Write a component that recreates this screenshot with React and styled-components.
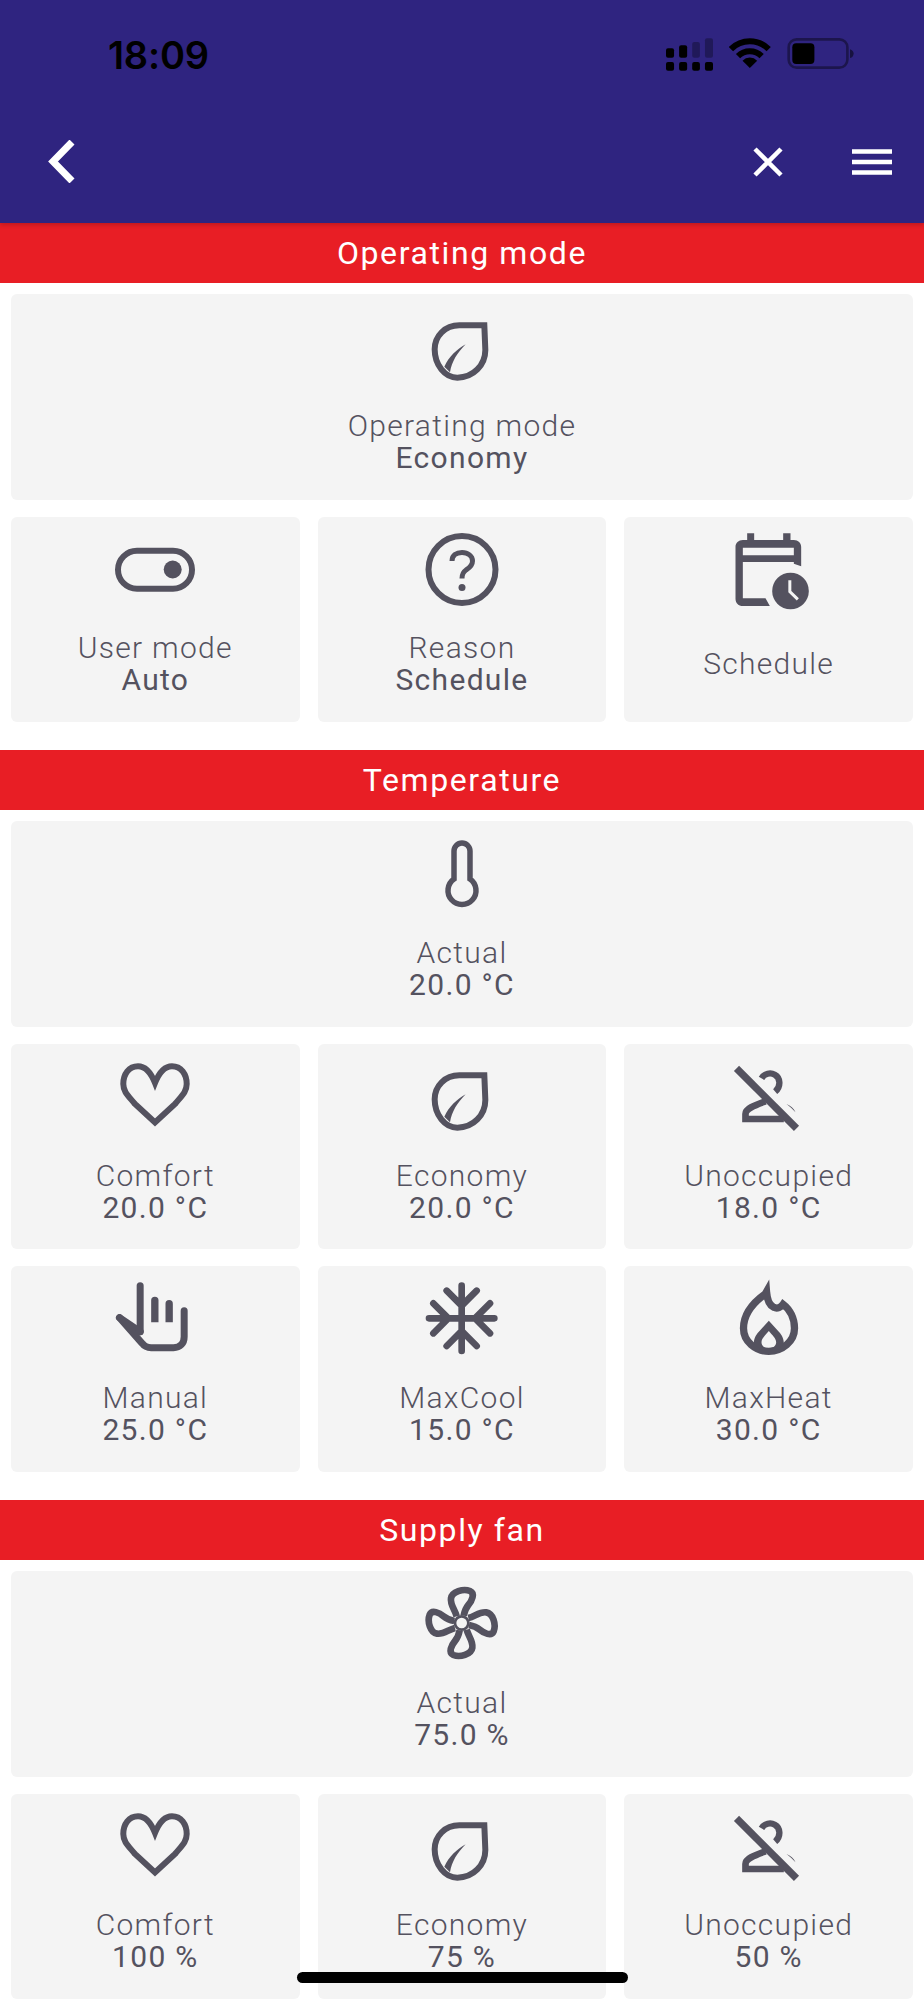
import styled, { createGlobalStyle } from 'styled-components';

const GlobalStyle = createGlobalStyle`
  html, body {
    margin: 0;
    padding: 0;
    background: #fff;
  }
  body {
    font-family: Roboto, "Liberation Sans", sans-serif;
  }
`;

const Screen = styled.div`
  position: relative;
  width: 924px;
  height: 2000px;
  overflow: hidden;
  background: #fff;
`;

const Header = styled.header`
  position: relative;
  z-index: 1;
  height: 223px;
  display: flex;
  flex-direction: column;
  background: #2f2480;
  box-shadow: 0 2px 4px rgba(0, 0, 0, 0.18);
`;

const StatusBar = styled.div`
  height: 100px;
  box-sizing: border-box;
  padding: 32px 70px 0 108px;
  display: flex;
  justify-content: space-between;
  align-items: flex-start;
`;

const Time = styled.span`
  font-family: Inter, "Liberation Sans", sans-serif;
  font-size: 38px;
  line-height: 46px;
  font-weight: 600;
  letter-spacing: -0.2px;
  color: #000;
`;

const StatusIcons = styled.div`
  display: flex;
  align-items: flex-start;
  gap: 16px;
  padding-top: 6px;
`;

const Toolbar = styled.div`
  flex: 1;
  padding: 0 32px 0 47px;
  display: flex;
  justify-content: space-between;
  align-items: center;
`;

const ToolbarRight = styled.div`
  display: flex;
  align-items: center;
  gap: 69px;
`;

const Section = styled.section`
  display: block;
`;

const SectionTitle = styled.h2`
  margin: 0;
  height: 60px;
  background: #e81e25;
  color: #fff;
  font-size: 32px;
  line-height: 60px;
  font-weight: 400;
  letter-spacing: 1.6px;
  text-align: center;
`;

const Grid = styled.div`
  display: grid;
  grid-template-columns: repeat(3, 1fr);
  grid-auto-rows: 205.5px;
  column-gap: 18px;
  row-gap: 17px;
  padding: 11px 11px 28.3px;
`;

const Card = styled.div`
  grid-column: ${(p) => (p.$wide ? '1 / -1' : 'auto')};
  box-sizing: border-box;
  padding: 8px 8px 6px;
  display: flex;
  flex-direction: column;
  align-items: center;
  background: #f4f4f4;
  border-radius: 6px;
  color: #54525f;
`;

const Icon = styled.svg`
  display: block;
  flex: none;
  width: 88px;
  height: 88px;
`;

const CardText = styled.div`
  flex: 1;
  display: flex;
  flex-direction: column;
  justify-content: center;
  align-items: center;
`;

const Label = styled.span`
  font-size: 30px;
  line-height: 32px;
  font-weight: 300;
  letter-spacing: 1.3px;
`;

const Value = styled.span`
  font-size: 30px;
  line-height: 32px;
  font-weight: 400;
  letter-spacing: 1.3px;
`;

const HomeIndicator = styled.div`
  position: absolute;
  left: 297px;
  top: 1972px;
  width: 331px;
  height: 11px;
  border-radius: 6px;
  background: #000;
`;

const ICON = '#54525f';

function LeafIcon() {
  return (
    <Icon viewBox="54 -24 264 264">
      <path d="M253 46H178C135 46 104 78 104 118C104 165 135 203 172 203C220 203 256 165 256 120Z" fill="none" stroke={ICON} strokeWidth="18" />
      <path d="M197 103C170 118 147 140 133 170L150 187C155 155 172 128 197 103Z" fill={ICON} />
    </Icon>
  );
}

function ToggleIcon() {
  return (
    <Icon viewBox="0 0 88 88">
      <rect x="7" y="25.7" width="74" height="38" rx="19" fill="none" stroke={ICON} strokeWidth="6" />
      <circle cx="61.7" cy="44.5" r="9" fill={ICON} />
    </Icon>
  );
}

function HelpIcon() {
  return (
    <Icon viewBox="0 0 88 88">
      <circle cx="44" cy="44.5" r="33.5" fill="none" stroke={ICON} strokeWidth="6" />
      <path d="M34 36C34 30 38.5 27.5 44 27.5C50 27.5 54.5 31 54.5 36C54.5 41 51 43 48 45C45.5 46.7 44 48.5 44 53.5" fill="none" stroke={ICON} strokeWidth="5" />
      <circle cx="44" cy="62.5" r="3.5" fill={ICON} />
    </Icon>
  );
}

function CalendarIcon() {
  return (
    <Icon viewBox="43.5 12 264 264">
      <path
        fillRule="evenodd"
        fill={ICON}
        d="M110 37H131V57H218V37H240V57H250C263 57 272 66 272 78V136L250 128V123H97V232H165L178 255H97C84 255 75 246 75 233V78C75 66 84 57 97 57H110ZM97 80V103H250V80Z"
      />
      <circle cx="240" cy="210" r="55" fill={ICON} />
      <path d="M238 178V212L262 235" fill="none" stroke="#f4f4f4" strokeWidth="9" />
    </Icon>
  );
}

function ThermometerIcon() {
  return (
    <Icon viewBox="0 0 88 88">
      <path d="M36 50V22a8 8 0 0 1 16 0V50a14 14 0 1 1-16 0Z" fill="none" stroke={ICON} strokeWidth="5.5" />
    </Icon>
  );
}

function HeartIcon() {
  return (
    <Icon viewBox="0 0 88 88">
      <path d="M44 31C40 21 34 14.3 27 14.3C18 14.3 12.3 22 12.3 32C12.3 40 17.5 44 24 52L44 70.5L64 52C70.5 44 75.7 40 75.7 32C75.7 22 70 14.3 61 14.3C54 14.3 48 21 44 31Z" fill="none" stroke={ICON} strokeWidth="6" />
    </Icon>
  );
}

function UnoccupiedIcon() {
  return (
    <Icon viewBox="133.5 36 264 264">
      <path d="M168 85L348 265" fill="none" stroke={ICON} strokeWidth="22" />
      <path d="M243 115C252 100 270 97 283 104C300 113 302 140 284 155" fill="none" stroke={ICON} strokeWidth="19" />
      <path d="M195 237V222C195 205 225 195 255 184M185 237H310" fill="none" stroke={ICON} strokeWidth="20" />
      <path d="M318 192C330 197 340 205 345 217C338 208 328 200 318 192Z" fill={ICON} />
    </Icon>
  );
}

function HandIcon() {
  return (
    <Icon viewBox="34.5 12 264 264">
      <path d="M122 47V185" fill="none" stroke={ICON} strokeWidth="21" strokeLinecap="round" />
      <path d="M60 143L122 185" fill="none" stroke={ICON} strokeWidth="21" strokeLinecap="round" />
      <path d="M60 143L128 220C135 230 145 233 155 233H222C242 233 254 220 254 200V122" fill="none" stroke={ICON} strokeWidth="21" strokeLinecap="round" />
      <path d="M155 157V91a11 11 0 0 1 22 0V157ZM198 157V101a11 11 0 0 1 22 0V157Z" fill={ICON} />
    </Icon>
  );
}

function SnowIcon() {
  return (
    <Icon viewBox="54 12 264 264">
      <path
        d="M185 47V243M87 145H283M140 62L185 107L230 62M140 228L185 183L230 228M100 100L145 145L100 190M270 100L225 145L270 190"
        fill="none"
        stroke={ICON}
        strokeWidth="20"
        strokeLinecap="round"
      />
    </Icon>
  );
}

function FlameIcon() {
  return (
    <Icon viewBox="43.5 12 264 264">
      <path d="M164 72C125 100 99 135 99 175C99 215 135 244 175 244C215 244 252 215 252 175C252 145 238 118 218 103C212 112 200 117 190 112C175 106 170 90 168 65Z" fill="none" stroke={ICON} strokeWidth="22" />
      <path fillRule="evenodd" fill={ICON} d="M175 152L145 185C135 196 130 205 130 222L150 240H200L220 222C220 205 215 196 205 185ZM175 183C165 195 153 205 153 217C153 228 163 235 175 235C187 235 197 228 197 217C197 205 185 195 175 183Z" />
    </Icon>
  );
}

const BLADE = 'M170 142C165 122 150 108 153 88C156 68 190 58 210 66C226 73 216 95 205 108C195 120 193 130 191 140';

function FanIcon() {
  return (
    <Icon viewBox="54 30 264 264">
      {[0, 90, 180, 270].map((angle) => (
        <path key={angle} d={BLADE} transform={`rotate(${angle} 185 162)`} fill="none" stroke={ICON} strokeWidth="20" />
      ))}
      <circle cx="185" cy="162" r="20" fill="#f4f4f4" stroke={ICON} strokeWidth="8" />
    </Icon>
  );
}

function SignalIcon() {
  return (
    <svg width="47" height="33" viewBox="77 55 140 97">
      <rect x="77" y="126" width="24" height="26" rx="6" />
      <rect x="116" y="126" width="24" height="26" rx="6" />
      <rect x="155" y="126" width="23" height="26" rx="6" />
      <rect x="193" y="126" width="24" height="26" rx="6" />
      <rect x="77" y="85" width="24" height="28" rx="6" />
      <rect x="116" y="76" width="24" height="37" rx="6" />
      <rect x="155" y="66" width="23" height="47" rx="6" opacity="0.3" />
      <rect x="193" y="55" width="24" height="58" rx="6" opacity="0.3" />
    </svg>
  );
}

function WifiIcon() {
  return (
    <svg width="42" height="30" viewBox="265 58 125 90">
      <path d="M270.4 91.4A80 80 0 0 1 383.6 91.4" fill="none" stroke="#000" strokeWidth="18" />
      <path d="M291.6 112.6A50 50 0 0 1 362.4 112.6" fill="none" stroke="#000" strokeWidth="18" />
      <path d="M327 148L305 126A31 31 0 0 1 349 126Z" />
    </svg>
  );
}

function BatteryIcon() {
  return (
    <svg width="67" height="31" viewBox="440 56 201 94">
      <rect x="444" y="60" width="178" height="86" rx="24" fill="none" stroke="#000" strokeOpacity="0.4" strokeWidth="8" />
      <rect x="455" y="72" width="67" height="63" rx="12" />
      <path d="M630 90C637 92 641 97 641 103C641 110 637 115 630 117Z" fillOpacity="0.5" />
    </svg>
  );
}

function BackIcon() {
  return (
    <svg width="28" height="43" viewBox="0 0 28 43">
      <path d="M25 2L6 21.5L25 41" fill="none" stroke="#fff" strokeWidth="7" />
    </svg>
  );
}

function CloseIcon() {
  return (
    <svg width="30" height="30" viewBox="0 0 30 30">
      <path d="M2 2L28 28M28 2L2 28" fill="none" stroke="#fff" strokeWidth="4.5" />
    </svg>
  );
}

function MenuIcon() {
  return (
    <svg width="40" height="26" viewBox="0 0 40 26">
      <path d="M0 2.5H40M0 13H40M0 23.5H40" fill="none" stroke="#fff" strokeWidth="4.5" />
    </svg>
  );
}

const sections = [
  {
    title: 'Operating mode',
    cards: [
      { icon: LeafIcon, label: 'Operating mode', value: 'Economy', wide: true },
      { icon: ToggleIcon, label: 'User mode', value: 'Auto' },
      { icon: HelpIcon, label: 'Reason', value: 'Schedule' },
      { icon: CalendarIcon, label: 'Schedule' },
    ],
  },
  {
    title: 'Temperature',
    cards: [
      { icon: ThermometerIcon, label: 'Actual', value: '20.0 °C', wide: true },
      { icon: HeartIcon, label: 'Comfort', value: '20.0 °C' },
      { icon: LeafIcon, label: 'Economy', value: '20.0 °C' },
      { icon: UnoccupiedIcon, label: 'Unoccupied', value: '18.0 °C' },
      { icon: HandIcon, label: 'Manual', value: '25.0 °C' },
      { icon: SnowIcon, label: 'MaxCool', value: '15.0 °C' },
      { icon: FlameIcon, label: 'MaxHeat', value: '30.0 °C' },
    ],
  },
  {
    title: 'Supply fan',
    cards: [
      { icon: FanIcon, label: 'Actual', value: '75.0 %', wide: true },
      { icon: HeartIcon, label: 'Comfort', value: '100 %' },
      { icon: LeafIcon, label: 'Economy', value: '75 %' },
      { icon: UnoccupiedIcon, label: 'Unoccupied', value: '50 %' },
    ],
  },
];

function App() {
  return (
    <Screen>
      <GlobalStyle />
      <Header>
        <StatusBar>
          <Time>18:09</Time>
          <StatusIcons>
            <SignalIcon />
            <WifiIcon />
            <BatteryIcon />
          </StatusIcons>
        </StatusBar>
        <Toolbar>
          <BackIcon />
          <ToolbarRight>
            <CloseIcon />
            <MenuIcon />
          </ToolbarRight>
        </Toolbar>
      </Header>
      {sections.map((section) => (
        <Section key={section.title}>
          <SectionTitle>{section.title}</SectionTitle>
          <Grid>
            {section.cards.map((card, i) => (
              <Card key={i} $wide={card.wide}>
                <card.icon />
                <CardText>
                  <Label>{card.label}</Label>
                  {card.value && <Value>{card.value}</Value>}
                </CardText>
              </Card>
            ))}
          </Grid>
        </Section>
      ))}
      <HomeIndicator />
    </Screen>
  );
}

export default App;
